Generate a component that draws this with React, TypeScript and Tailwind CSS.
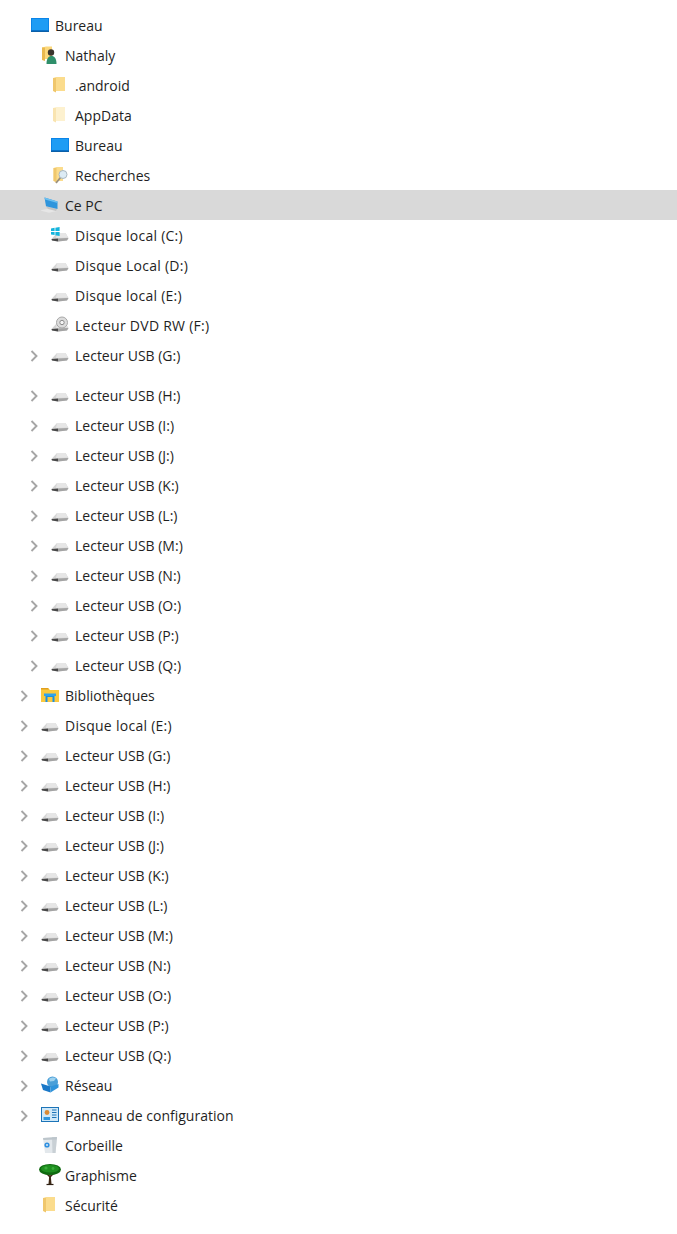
type IconName = "desktop" | "user" | "folder" | "paleFolder" | "search" | "pc" | "winDrive" | "drive" | "dvd" | "library" | "network" | "panel" | "bin" | "tree";

type Row = {
  label: string;
  icon: IconName;
  level: "top" | "base" | "inner";
  arrow?: boolean;
  selected?: boolean;
  spaced?: boolean;
};

const usbLetters = ["H", "I", "J", "K", "L", "M", "N", "O", "P", "Q"];

const rows: Row[] = [
  { label: "Bureau", icon: "desktop", level: "top" },
  { label: "Nathaly", icon: "user", level: "base" },
  { label: ".android", icon: "folder", level: "inner" },
  { label: "AppData", icon: "paleFolder", level: "inner" },
  { label: "Bureau", icon: "desktop", level: "inner" },
  { label: "Recherches", icon: "search", level: "inner" },
  { label: "Ce PC", icon: "pc", level: "base", selected: true },
  { label: "Disque local (C:)", icon: "winDrive", level: "inner" },
  { label: "Disque Local (D:)", icon: "drive", level: "inner" },
  { label: "Disque local (E:)", icon: "drive", level: "inner" },
  { label: "Lecteur DVD RW (F:)", icon: "dvd", level: "inner" },
  { label: "Lecteur USB (G:)", icon: "drive", level: "inner", arrow: true, spaced: true },
  ...usbLetters.map((l): Row => ({ label: `Lecteur USB (${l}:)`, icon: "drive", level: "inner", arrow: true })),
  { label: "Bibliothèques", icon: "library", level: "base", arrow: true },
  { label: "Disque local (E:)", icon: "drive", level: "base", arrow: true },
  ...["G", ...usbLetters].map((l): Row => ({ label: `Lecteur USB (${l}:)`, icon: "drive", level: "base", arrow: true })),
  { label: "Réseau", icon: "network", level: "base", arrow: true },
  { label: "Panneau de configuration", icon: "panel", level: "base", arrow: true },
  { label: "Corbeille", icon: "bin", level: "base" },
  { label: "Graphisme", icon: "tree", level: "base" },
  { label: "Sécurité", icon: "folder", level: "base" },
];

function DriveShape() {
  return (
    <>
      <path d="M0.5 13 6 7H14.5L17.5 12 16 14.5 7 15.5 1 14.5Z" fill="#d4d4d4" />
      <path d="M6 7H14.5L17 11.5 5 12Z" fill="#e6e6e6" />
      <path d="M0.5 13 7 12.5V15.5L1 14.5Z" fill="#484848" />
      <path d="M7 12.5 17.5 12 16 14.5 7 15.5Z" fill="#a4a4a4" />
    </>
  );
}

function TreeIcon({ name }: { name: IconName }) {
  switch (name) {
    case "desktop":
      return (
        <svg viewBox="0 0 18 18" className="h-[18px] w-[18px]">
          <rect x="0" y="2" width="18" height="14" fill="#0a84e8" />
          <rect x="1" y="3" width="16" height="11" fill="#1e9cf4" />
          <rect x="0" y="14.5" width="18" height="1.5" fill="#0b5fa8" />
        </svg>
      );
    case "user":
      return (
        <svg viewBox="0 0 18 18" className="h-[18px] w-[18px]">
          <path d="M1 1.5 5 0.5H11V13H1Z" fill="#fcd87c" />
          <path d="M1 1.5H4V15L1 14Z" fill="#e9b94f" />
          <circle cx="10" cy="6.5" r="3.2" fill="#3a342c" />
          <path d="M5.5 18C5.5 12.5 7.5 10 10.5 10S15.5 12.5 15.5 18Z" fill="#2f8f6a" />
        </svg>
      );
    case "folder":
      return (
        <svg viewBox="0 0 18 18" className="h-[18px] w-[18px]">
          <path d="M2 2 5 1H14V15H2Z" fill="#fbdc8d" />
          <path d="M2 2H5V16.5L2 15Z" fill="#f0c76c" />
        </svg>
      );
    case "paleFolder":
      return (
        <svg viewBox="0 0 18 18" className="h-[18px] w-[18px]">
          <path d="M2 2 5 1H14V15H2Z" fill="#fdf1cf" />
          <path d="M2 2H5V16.5L2 15Z" fill="#f9e4b0" />
        </svg>
      );
    case "search":
      return (
        <svg viewBox="0 0 18 18" className="h-[18px] w-[18px]">
          <path d="M2.5 2 5.5 1H12V15H2.5Z" fill="#fbdc8d" />
          <path d="M2.5 2H5.5V16.5L2.5 15Z" fill="#f0c76c" />
          <path d="M5 17 9.5 11.5" stroke="#9a8f7a" strokeWidth="1.8" />
          <circle cx="12" cy="8.5" r="4" fill="#dcebf5" stroke="#a9b8c2" />
        </svg>
      );
    case "pc":
      return (
        <svg viewBox="0 0 18 18" className="h-[18px] w-[18px]">
          <path d="M-1 14.5 8 12.5 16 15 8 16.8Z" fill="#e6e6e6" />
          <path d="M5 10.5 16 13 15 15 7 13Z" fill="#c4c4c4" />
          <path d="M3.5 1.5 16.5 5.5V13L5 10.2Z" fill="#2f95dc" />
          <path d="M3.5 1.5 16.5 5.5V7L4 3.5Z" fill="#6cc0f0" />
        </svg>
      );
    case "winDrive":
      return (
        <svg viewBox="0 0 18 18" className="h-[18px] w-[18px]">
          <DriveShape />
          <path d="M0 2.4 3.6 1.8V5H0ZM4.4 1.7 8.6 1V5H4.4ZM0 5.9H3.6V9L0 8.5ZM4.4 5.9H8.6V10L4.4 9.2Z" fill="#14b4dc" />
        </svg>
      );
    case "drive":
      return (
        <svg viewBox="0 0 18 18" className="h-[18px] w-[18px]">
          <DriveShape />
        </svg>
      );
    case "dvd":
      return (
        <svg viewBox="0 0 18 18" className="h-[18px] w-[18px]">
          <DriveShape />
          <circle cx="11" cy="6.5" r="5.5" fill="#dcdcdc" stroke="#a8a8a8" />
          <circle cx="11" cy="6.5" r="2.2" fill="#f5f5f5" stroke="#8c8c8c" />
        </svg>
      );
    case "library":
      return (
        <svg viewBox="0 0 18 18" className="h-[18px] w-[18px]">
          <path d="M0 2H7L9 4H18V16H0Z" fill="#fbc93e" />
          <path d="M0 2H7L8 3.5H0Z" fill="#e09f1f" />
          <path d="M4.5 8H13.5V16H11.5V11H6.5V16H4.5Z" fill="#1a8fe3" />
          <rect x="3" y="7.5" width="12" height="2.5" fill="#2fa3ee" />
        </svg>
      );
    case "network":
      return (
        <svg viewBox="0 0 18 18" className="h-[18px] w-[18px]">
          <circle cx="11.5" cy="6" r="5.5" fill="#4a9fd8" />
          <path d="M8 3C10 1.5 13 1 15 2.5L13 5 9 5.5Z" fill="#9fd2ee" />
          <path d="M0 7.5 9.5 10.5V16.5L2 14Z" fill="#1a78c8" />
          <path d="M9.5 10.5 17.5 8V11.5L9.5 16.5Z" fill="#2f93da" />
        </svg>
      );
    case "panel":
      return (
        <svg viewBox="0 0 18 18" className="h-[18px] w-[18px]">
          <rect x="0.5" y="1.5" width="17" height="14" fill="#cfe8f8" stroke="#1c74b8" />
          <circle cx="6" cy="6.5" r="2.4" fill="#d98a34" />
          <path d="M2.5 11H9V14H2.5Z" fill="#2f95dc" />
          <path d="M11 4H15.5M11 6.5H15.5M11 9H15.5M11 11.5H15.5" stroke="#1c74b8" strokeWidth="1.2" />
        </svg>
      );
    case "bin":
      return (
        <svg viewBox="0 0 18 18" className="h-[18px] w-[18px]">
          <path d="M2 2 16 1 14.5 17H4Z" fill="#e3e8ec" />
          <path d="M11 1.3 16 1 14.5 17H11.5Z" fill="#c9d0d5" />
          <path d="M2 2 16 1 15.6 3.5 2.4 4Z" fill="#bcc5cb" />
          <circle cx="6" cy="9" r="2.6" fill="#2f8fe0" />
          <circle cx="6" cy="9" r="0.9" fill="#e8f3fb" />
        </svg>
      );
    case "tree":
      return (
        <svg viewBox="0 0 22 22" className="h-[22px] w-[22px] shrink-0">
          <path d="M9.5 20 10.3 11H11.7L12.5 20Z" fill="#3d2815" />
          <path d="M7.5 20.5H14.5" stroke="#2e1f13" strokeWidth="1.2" />
          <path d="M7 9 11 13 15 9" stroke="#3d2815" strokeWidth="1.3" fill="none" />
          <ellipse cx="11" cy="5.5" rx="11" ry="5.5" fill="#0f6a10" />
          <ellipse cx="11" cy="4.8" rx="9" ry="3.8" fill="#1f8f20" />
          <circle cx="7" cy="4" r="1.6" fill="#39ad39" />
          <circle cx="14" cy="4.5" r="1.4" fill="#39ad39" />
        </svg>
      );
  }
}

const levelClass = {
  top: "pl-[6px]",
  base: "pl-[16px]",
  inner: "pl-[26px]",
};

export default function App() {
  return (
    <div className="min-h-[1234px] bg-white pt-[10px] font-['Open_Sans','Noto_Sans',sans-serif] text-[14px] text-[#1f1f1f]">
      {rows.map((row, i) => (
        <div
          key={i}
          className={`flex h-[30px] items-center ${levelClass[row.level]} ${row.selected ? "bg-[#d9d9d9]" : ""} ${row.spaced ? "mb-[10px]" : ""}`}
        >
          <span className="mt-[1px] flex w-[16px] shrink-0 justify-center">
            {row.arrow && (
              <svg viewBox="0 0 8 12" className="h-[12px] w-[8px]">
                <path d="M1.5 1 6.5 6 1.5 11" fill="none" stroke="#a6a6a6" strokeWidth="1.9" />
              </svg>
            )}
          </span>
          <span className="ml-[9px] flex w-[18px] shrink-0 items-center justify-center">
            <TreeIcon name={row.icon} />
          </span>
          <span className={`ml-[6px] whitespace-nowrap ${/Disque|DVD/.test(row.label) ? "tracking-[0.27px]" : ""}`}>{row.label}</span>
        </div>
      ))}
    </div>
  );
}
